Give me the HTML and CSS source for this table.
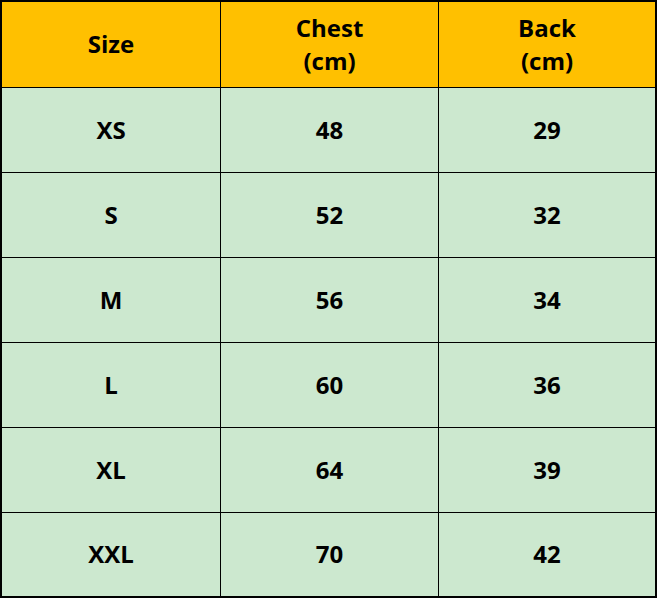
FILE: index.html
```html
<!DOCTYPE html>
<html>
<head>
<meta charset="utf-8">
<link rel="stylesheet" href="styles.css">
</head>
<body>
<div class="table">
  <div class="cell head">Size</div>
  <div class="cell head">Chest<br>(cm)</div>
  <div class="cell head">Back<br>(cm)</div>
  <div class="cell">XS</div><div class="cell">48</div><div class="cell">29</div>
  <div class="cell">S</div><div class="cell">52</div><div class="cell">32</div>
  <div class="cell">M</div><div class="cell">56</div><div class="cell">34</div>
  <div class="cell">L</div><div class="cell">60</div><div class="cell">36</div>
  <div class="cell">XL</div><div class="cell">64</div><div class="cell">39</div>
  <div class="cell">XXL</div><div class="cell">70</div><div class="cell">42</div>
</div>
</body>
</html>
```
FILE: styles.css
```css
html, body { margin: 0; padding: 0; background: #fff; }
.table {
  width: 657px;
  height: 598px;
  box-sizing: border-box;
  padding: 2px;
  background: #000;
  display: grid;
  grid-template-columns: 218px 217px 216px;
  grid-template-rows: 85px repeat(5, 84px) 83px;
  gap: 1px;
}
.cell {
  background: #cce8cf;
  display: flex;
  align-items: center;
  justify-content: center;
  text-align: center;
  font-family: "Open Sans", "Liberation Sans", sans-serif;
  font-weight: 700;
  font-size: 24px;
  line-height: 33px;
  color: #000;
  padding-bottom: 2px;
  box-sizing: border-box;
}
.head { background: #ffc000; }
```
